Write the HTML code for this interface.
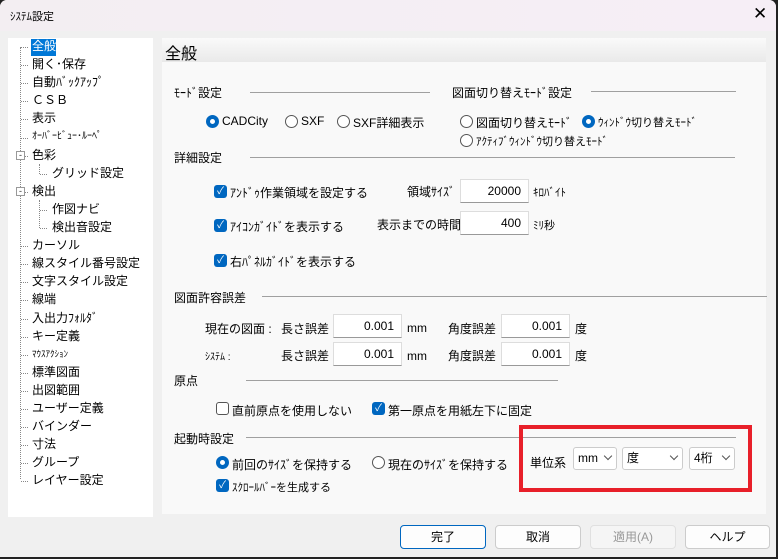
<!DOCTYPE html><html><head><meta charset="utf-8"><style>
*{margin:0;padding:0;box-sizing:border-box}
body{width:778px;height:559px;background:#222;font-family:"Liberation Sans","Noto Sans CJK JP",sans-serif;font-size:12px;color:#000;position:relative;overflow:hidden}
.win{position:absolute;left:0;top:0;width:776px;height:557px;background:#f0f0f0;border-radius:7px 7px 0 0;overflow:hidden}
.title{position:absolute;left:0;top:0;width:776px;height:31px;background:linear-gradient(90deg,#f3eef2,#f6eef6)}
.a{position:absolute;white-space:nowrap}
.tree{position:absolute;left:8px;top:38px;width:145px;height:479px;background:#fff}
.hdr{position:absolute;left:162px;top:38px;width:604px;height:24px;background:linear-gradient(#fafafa,#e9e9e9)}
.cont{position:absolute;left:162px;top:62px;width:604px;height:452px;background:#f9f9f9}
.line{position:absolute;height:1px;background:#a0a0a0}
.rad{position:absolute;width:13px;height:13px;border:1px solid #555;border-radius:50%;background:#fff}
.rad.on{border:4px solid #0067c0}
.chk{position:absolute;width:13px;height:13px;border-radius:3px;background:#0067c0;color:#fff;font-size:10px;line-height:13px;text-align:center}
.chk.off{background:#fff;border:1px solid #555}
.inp{position:absolute;background:#fff;border:1px solid #ddd;border-bottom:1px solid #999;text-align:right;padding-right:7px;line-height:22px;height:24px}
.sel{position:absolute;background:#fff;border:1px solid #ccc;border-radius:3px;height:23px;line-height:21px;padding-left:4px}
.sel i{position:absolute;right:5px;top:5px;width:6px;height:6px;border-right:1px solid #555;border-bottom:1px solid #555;transform:rotate(45deg)}
.btn{position:absolute;top:525px;height:24px;border:1px solid #ccc;border-radius:4px;background:#fdfdfd;text-align:center;line-height:22px}
.dv{position:absolute;border-left:1px dotted #888}
.dh{position:absolute;border-top:1px dotted #888;width:7px}
.ti{position:absolute;font-size:12px;line-height:14px}
.pm{position:absolute;width:9px;height:9px;border:1px solid #999;background:#fff;font-size:9px;line-height:6px;text-align:center;color:#333}
</style></head><body><div class="win">
<div class="title"></div>
<div class="a" style="left:10px;top:8px;font-size:11px">ｼｽﾃﾑ設定</div>
<div class="a" style="left:753px;top:4px;font-size:17px;font-weight:300">✕</div>

<div class="tree">
<div class="dv" style="left:12px;top:9px;height:432px"></div>
<div class="dv" style="left:31px;top:126px;height:10px"></div>
<div class="dv" style="left:31px;top:162px;height:28px"></div>
</div>
<div class="a" style="left:31px;top:39px;width:25px;height:17px;background:#0078d7"></div>
<div id="t"></div>

<div class="hdr"></div>
<div class="a" style="left:165px;top:40px;font-size:16px">全般</div>
<div class="cont"></div>

<div class="a" style="left:174px;top:84px">ﾓｰﾄﾞ設定</div>
<div class="line" style="left:250px;top:92px;width:180px"></div>
<div class="a" style="left:452px;top:84px">図面切り替えﾓｰﾄﾞ設定</div>
<div class="line" style="left:591px;top:91px;width:145px"></div>
<div class="rad on" style="left:206px;top:115px"></div><div class="a" style="left:222px;top:114px">CADCity</div>
<div class="rad" style="left:285px;top:115px"></div><div class="a" style="left:301px;top:114px">SXF</div>
<div class="rad" style="left:337px;top:115px"></div><div class="a" style="left:353px;top:114px">SXF詳細表示</div>
<div class="rad" style="left:460px;top:115px"></div><div class="a" style="left:476px;top:114px">図面切り替えﾓｰﾄﾞ</div>
<div class="rad on" style="left:582px;top:115px"></div><div class="a" style="left:598px;top:114px;font-size:11px">ｳｨﾝﾄﾞｳ切り替えﾓｰﾄﾞ</div>
<div class="rad" style="left:460px;top:134px"></div><div class="a" style="left:476px;top:133px;font-size:11px">ｱｸﾃｨﾌﾞｳｨﾝﾄﾞｳ切り替えﾓｰﾄﾞ</div>
<div class="a" style="left:174px;top:149px">詳細設定</div>
<div class="line" style="left:250px;top:157px;width:485px"></div>

<div class="chk" style="left:214px;top:185px">✓</div><div class="a" style="left:230px;top:184px">ｱﾝﾄﾞｩ作業領域を設定する</div>
<div class="chk" style="left:214px;top:219px">✓</div><div class="a" style="left:230px;top:218px">ｱｲｺﾝｶﾞｲﾄﾞを表示する</div>
<div class="chk" style="left:214px;top:254px">✓</div><div class="a" style="left:230px;top:253px">右ﾊﾟﾈﾙｶﾞｲﾄﾞを表示する</div>
<div class="a" style="left:407px;top:183px">領域ｻｲｽﾞ</div>
<div class="inp" style="left:460px;top:179px;width:69px">20000</div>
<div class="a" style="left:533px;top:184px;font-size:11px">ｷﾛﾊﾞｲﾄ</div>
<div class="a" style="left:377px;top:216px">表示までの時間</div>
<div class="inp" style="left:460px;top:211px;width:69px">400</div>
<div class="a" style="left:533px;top:217px;font-size:11px">ﾐﾘ秒</div>

<div class="a" style="left:174px;top:289px">図面許容誤差</div>
<div class="line" style="left:262px;top:296px;width:505px"></div>
<div class="a" style="left:205px;top:320px">現在の図面 :</div>
<div class="a" style="left:281px;top:320px">長さ誤差</div>
<div class="inp" style="left:333px;top:314px;width:69px">0.001</div>
<div class="a" style="left:407px;top:321px">mm</div>
<div class="a" style="left:448px;top:320px">角度誤差</div>
<div class="inp" style="left:501px;top:314px;width:69px">0.001</div>
<div class="a" style="left:575px;top:320px">度</div>
<div class="a" style="left:205px;top:348px;font-size:10px">ｼｽﾃﾑ :</div>
<div class="a" style="left:281px;top:347px">長さ誤差</div>
<div class="inp" style="left:333px;top:342px;width:69px">0.001</div>
<div class="a" style="left:407px;top:349px">mm</div>
<div class="a" style="left:448px;top:347px">角度誤差</div>
<div class="inp" style="left:501px;top:342px;width:69px">0.001</div>
<div class="a" style="left:575px;top:347px">度</div>

<div class="a" style="left:174px;top:372px">原点</div>
<div class="line" style="left:246px;top:380px;width:312px"></div>
<div class="chk off" style="left:216px;top:402px"></div><div class="a" style="left:232px;top:402px">直前原点を使用しない</div>
<div class="chk" style="left:372px;top:402px">✓</div><div class="a" style="left:388px;top:402px">第一原点を用紙左下に固定</div>

<div class="a" style="left:174px;top:430px">起動時設定</div>
<div class="line" style="left:246px;top:437px;width:490px"></div>
<div class="rad on" style="left:216px;top:456px"></div><div class="a" style="left:232px;top:456px">前回のｻｲｽﾞを保持する</div>
<div class="rad" style="left:372px;top:456px"></div><div class="a" style="left:388px;top:456px">現在のｻｲｽﾞを保持する</div>
<div class="chk" style="left:216px;top:479px">✓</div><div class="a" style="left:232px;top:479px;font-size:11px">ｽｸﾛｰﾙﾊﾞｰを生成する</div>

<div class="a" style="left:519px;top:425px;width:233px;height:67px;border:4px solid #e8202a"></div>
<div class="a" style="left:530px;top:454px">単位系</div>
<div class="sel" style="left:573px;top:447px;width:44px">mm<i></i></div>
<div class="sel" style="left:622px;top:447px;width:61px">度<i></i></div>
<div class="sel" style="left:689px;top:447px;width:46px">4桁<i></i></div>

<div class="btn" style="left:400px;width:86px;border:1px solid #0067c0">完了</div>
<div class="btn" style="left:495px;width:86px">取消</div>
<div class="btn" style="left:590px;width:86px;color:#999;background:#f5f5f5;border-color:#e0e0e0">適用(A)</div>
<div class="btn" style="left:685px;width:85px">ヘルプ</div>
</div>
<script>
var items=[["全般",0,1],["開く･保存",0],["自動ﾊﾞｯｸｱｯﾌﾟ",0],["ＣＳＢ",0],["表示",0],["ｵｰﾊﾞｰﾋﾞｭｰ･ﾙｰﾍﾟ",0,0,10],["色彩",0,0,0,1],["グリッド設定",1],["検出",0,0,0,1],["作図ナビ",1],["検出音設定",1],["カーソル",0],["線スタイル番号設定",0],["文字スタイル設定",0],["線端",0],["入出力ﾌｫﾙﾀﾞ",0],["キー定義",0],["ﾏｳｽｱｸｼｮﾝ",0,0,9],["標準図面",0],["出図範囲",0],["ユーザー定義",0],["バインダー",0],["寸法",0],["グループ",0],["レイヤー設定",0]];
var h="";items.forEach(function(it,i){var y=47+i*18.1;var x=it[1]?52:32;var lx=it[1]?40:21;
h+='<div class="dh" style="left:'+lx+'px;top:'+y+'px"></div>';
if(it[4])h+='<div class="pm" style="left:16px;top:'+(y-5)+'px">-</div>';
h+='<div class="ti" style="left:'+x+'px;top:'+(y-8)+'px;'+(it[2]?'color:#fff;':'')+(it[3]?'font-size:'+it[3]+'px;':'')+'">'+it[0]+'</div>';});
document.getElementById("t").innerHTML=h;
</script>
</body></html>
